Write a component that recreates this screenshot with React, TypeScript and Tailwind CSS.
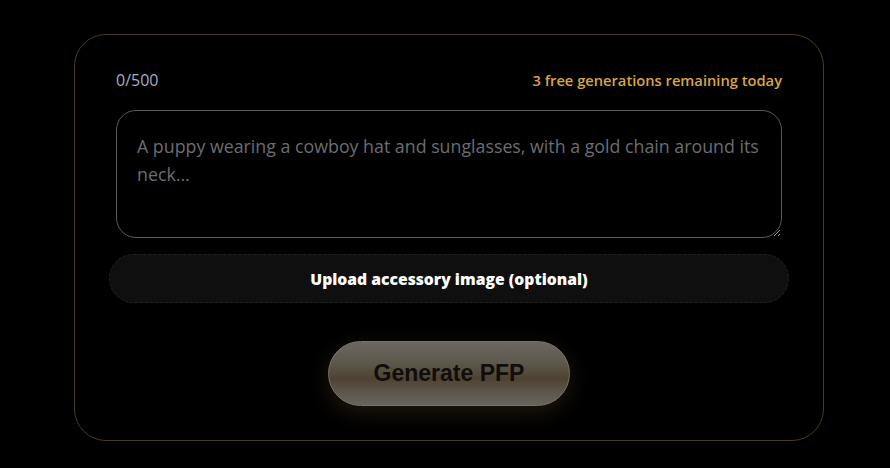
import React, { useState } from "react";

const App: React.FC = () => {
  const [prompt, setPrompt] = useState("");

  return (
    <div
      className="min-h-[468px] w-full bg-black pt-[34px]"
      style={{ fontFamily: "'Open Sans', Lato, sans-serif" }}
    >
      <div className="ml-[74px] w-[750px] rounded-[32px] border border-[#4a3b20] px-[41px] pt-[33px] pb-[34px]">
        <div className="flex items-center justify-between">
          <span className="text-[16px] leading-6 text-[#a3aec4]">
            {prompt.length}/500
          </span>
          <span className="text-[14.7px] font-semibold leading-6 text-[#d9a441]">
            3 free generations remaining today
          </span>
        </div>

        <textarea
          value={prompt}
          onChange={(e) => setPrompt(e.target.value.slice(0, 500))}
          placeholder="A puppy wearing a cowboy hat and sunglasses, with a gold chain around its neck..."
          className="mt-[18px] block h-[128px] w-full resize-y rounded-[20px] border border-[#5a5a5a] bg-black pl-5 pr-4 py-[21px] text-[17.8px] leading-[28px] text-white placeholder:text-[#6b6d72] focus:outline-none"
        />

        <button
          type="button"
          className="-mx-[7px] mt-[16px] flex h-[49px] w-[calc(100%+14px)] items-center justify-center rounded-full border border-dashed border-[#222222] bg-[#0f0f0f] pt-[2px] text-[15.7px] font-extrabold text-white"
        >
          Upload accessory image (optional)
        </button>

        <div className="mt-[38px] flex justify-center">
          <button
            type="button"
            className="h-[65px] w-[242px] rounded-full border border-[#77736a] bg-[linear-gradient(to_bottom,#6b6861_0%,#5d564a_35%,#4f4231_58%,#5d574d_80%,#67645d_100%)] text-[23px] font-bold text-[#100e0d] shadow-[0_6px_22px_rgba(80,62,35,0.4)]"
            style={{ fontFamily: "'Liberation Sans', Arial, sans-serif" }}
          >
            Generate PFP
          </button>
        </div>
      </div>
    </div>
  );
};

export default App;
